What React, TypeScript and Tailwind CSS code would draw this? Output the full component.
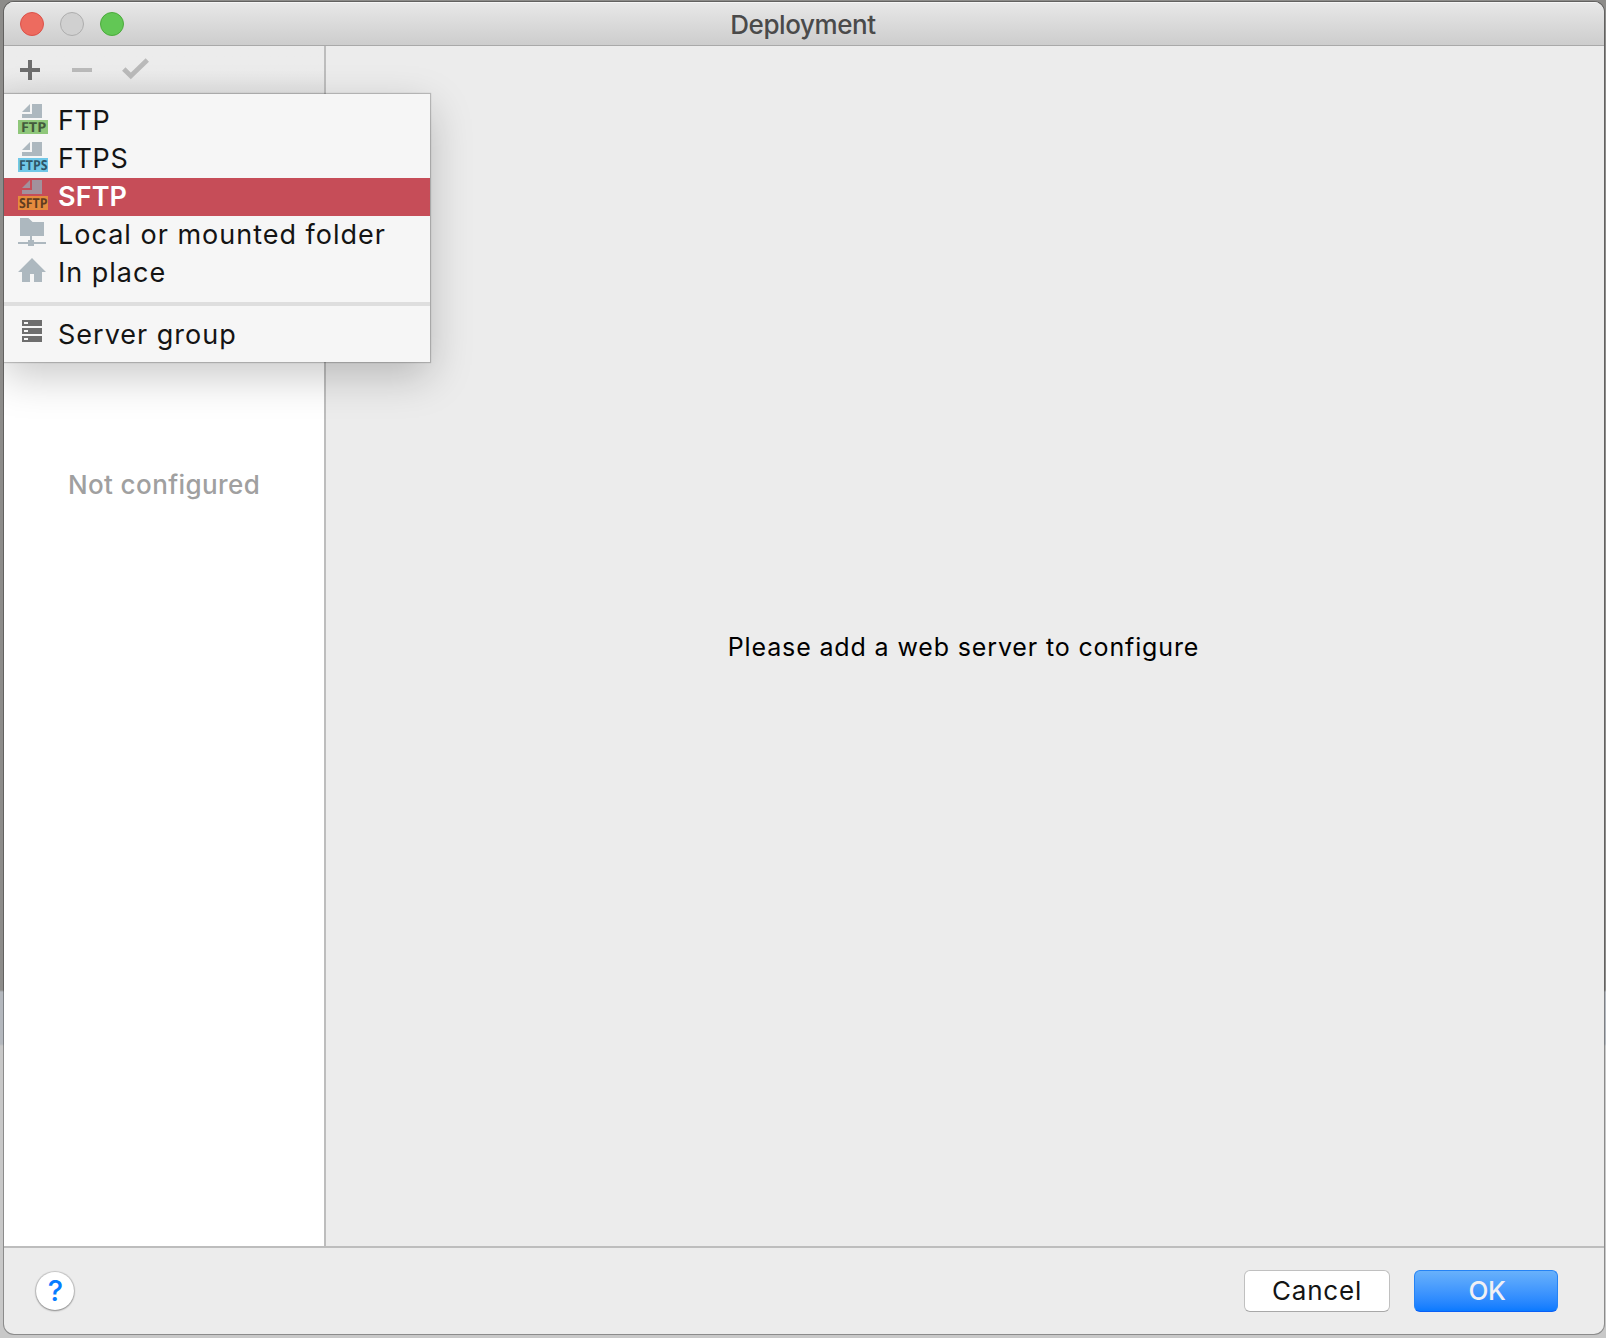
import type { ReactNode } from "react";

function Icon({ children }: { children: ReactNode }) {
  return (
    <svg viewBox="0 0 32 32" className="size-8 shrink-0 overflow-visible">
      {children}
    </svg>
  );
}

function ProtocolIcon({ label, fill, page = "#adb8bf", ink = "#43593c", x = 17.2, width }: { label: string; fill: string; page?: string; ink?: string; x?: number; width: number }) {
  return (
    <Icon>
      <path fill={page} d="m6 10 8-8v8zM16 2h10v14H6v-4h10z" />
      <path fill={fill} d="M2 18h30v14H2z" />
      <text x={x} y={30} textAnchor="middle" textLength={width} lengthAdjust="spacingAndGlyphs" textRendering="geometricPrecision" fontSize={13.8} fontWeight={700} fontFamily="Open Sans, sans-serif" fill={ink}>
        {label}
      </text>
    </Icon>
  );
}

function MountedFolderIcon() {
  return (
    <Icon>
      <path fill="#adb8bf" d="M4 2h8.4l4.2 4H28v14H16v4h2v2h12v2H18v2h-6v-2H2v-2h10v-2h2v-4H4z" />
    </Icon>
  );
}

function HomeIcon() {
  return (
    <Icon>
      <path fill="#adb8bf" d="m16 4 14 14h-4v10h-8v-8h-4v8H6V18H2z" />
    </Icon>
  );
}

function ServerGroupIcon() {
  return (
    <Icon>
      <path fill="#6e6e6e" fillRule="evenodd" d="M6 4h20v6H6zM8 6v2h4V6zM6 12h20v6H6zM8 14v2h4v-2zM6 20h20v6H6zM8 22v2h4v-2z" />
    </Icon>
  );
}

function MenuItem({ icon, label, acronym = false, selected = false }: { icon: ReactNode; label: string; acronym?: boolean; selected?: boolean }) {
  return (
    <li className={selected ? "flex h-[38px] items-start gap-[10px] bg-[#c64d58] pl-3 font-semibold text-white" : "flex h-[38px] items-start gap-[10px] pl-3 text-[#141414]"}>
      {icon}
      <span className={selected ? "text-[27px] leading-[37px] tracking-[0.1px] whitespace-nowrap" : acronym ? "text-[27px] leading-[37px] tracking-[0.6px] whitespace-nowrap" : "text-[27px] leading-[37px] tracking-[1px] whitespace-nowrap"}>{label}</span>
    </li>
  );
}

function AddServerMenu() {
  return (
    <ul className="absolute top-12 left-0 h-[268px] w-[426px] bg-[#f6f6f6] pt-2 shadow-[0_0_1px_1px_rgba(0,0,0,0.2),0_14px_40px_rgba(0,0,0,0.22)]">
      <MenuItem acronym label="FTP" icon={<ProtocolIcon label="FTP" fill="#8fc77a" x={17.6} width={25.4} />} />
      <MenuItem acronym label="FTPS" icon={<ProtocolIcon label="FTPS" fill="#71c8e8" ink="#2f5668" width={28.6} />} />
      <MenuItem acronym selected label="SFTP" icon={<ProtocolIcon label="SFTP" fill="#e58b3e" page="#a2919c" ink="#5f3c20" width={28.6} />} />
      <MenuItem label="Local or mounted folder" icon={<MountedFolderIcon />} />
      <MenuItem label="In place" icon={<HomeIcon />} />
      <li className="mt-[10px] mb-[10px] h-1 bg-[#dedede]" />
      <MenuItem label="Server group" icon={<ServerGroupIcon />} />
    </ul>
  );
}

function TitleBar() {
  return (
    <header className="flex h-11 shrink-0 items-center border-b border-[#a9a9a9] bg-linear-to-b from-[#e8e8e8] to-[#cdcdcd] pl-4 shadow-[inset_0_1px_0_#f5f5f5]">
      <div className="flex w-[200px] gap-4">
        <span className="size-6 rounded-full border border-[#db5149] bg-[#ed6b5f]" />
        <span className="size-6 rounded-full border border-[#adadad] bg-[#d0d0d0]" />
        <span className="size-6 rounded-full border border-[#4caa3c] bg-[#62c755]" />
      </div>
      <h1 className="flex-1 pt-[2px] pr-[218px] text-center text-[26px] leading-[42px] font-medium tracking-[-0.42px] text-[#4a4a4a]">Deployment</h1>
    </header>
  );
}

function Toolbar() {
  return (
    <div className="flex h-12 items-center gap-5 bg-linear-to-b from-[#ececec] from-50% to-[#e2e2e2] pl-[10px]">
      <svg viewBox="0 0 32 32" className="size-8">
        <path fill="#6e6e6e" d="M14 6h4v8h8v4h-8v8h-4v-8H6v-4h8z" />
      </svg>
      <svg viewBox="0 0 32 32" className="size-8">
        <path fill="#bababa" d="M6 14h20v4H6z" />
      </svg>
      <svg viewBox="0 0 32 32" className="size-8">
        <path fill="none" stroke="#bababa" strokeWidth={4.8} d="m5.8 15 7 7L29.3 6" />
      </svg>
    </div>
  );
}

export default function App() {
  return (
    <div className="flex h-[1338px] w-[1606px] bg-linear-to-b from-[#8d8c8a] from-[990px] via-[#b4b8be] via-[992px] to-[#b4b8be] to-[1044px] font-['Inter',sans-serif]">
      <div className="flex w-full bg-linear-to-b from-transparent from-[1044px] to-[#c8c8c8] to-[1046px] pt-[2px] pr-[2px] pb-1 pl-1">
        <div className="flex flex-1 flex-col overflow-hidden rounded-[10px] bg-[#ececec] shadow-[0_0_0_1px_rgba(0,0,0,0.3)]">
          <TitleBar />
          <main className="relative flex h-[1200px]">
            <aside className="flex w-[322px] flex-col border-r-2 border-[#bdbdbd]">
              <Toolbar />
              <div className="flex flex-1 justify-center bg-white pt-[373px]">
                <p className="text-[26px] leading-9 font-medium tracking-[0.4px] text-[#a0a0a0]">Not configured</p>
              </div>
            </aside>
            <section className="flex flex-1 items-center justify-center pt-[2px] pr-[3px]">
              <p className="text-[25px] leading-9 tracking-[0.86px] text-black">Please add a web server to configure</p>
            </section>
            <AddServerMenu />
          </main>
          <footer className="flex flex-1 items-center border-t-2 border-[#bdbdbd] pr-[46px] pl-8">
            <button className="mr-auto flex size-[38px] items-center justify-center rounded-full bg-white pl-px text-[29px] font-medium text-[#067cff] shadow-[0_0_1px_1px_rgba(0,0,0,0.16),0_1px_2px_rgba(0,0,0,0.3)]">?</button>
            <button className="mr-6 h-[42px] w-[146px] rounded-[6px] border border-[#c0c0c0] border-b-[#a8a8a8] bg-white text-[26px] leading-10 tracking-[0.8px] text-[#141414]">Cancel</button>
            <button className="h-[42px] w-[144px] rounded-[6px] border border-[#2583f5] border-b-[#0a5ff5] bg-linear-to-b from-[#68b1fb] to-[#087aff] pl-[2px] text-[26px] leading-10 font-medium tracking-[-0.3px] text-[#f0f0f4]">OK</button>
          </footer>
        </div>
      </div>
    </div>
  );
}
